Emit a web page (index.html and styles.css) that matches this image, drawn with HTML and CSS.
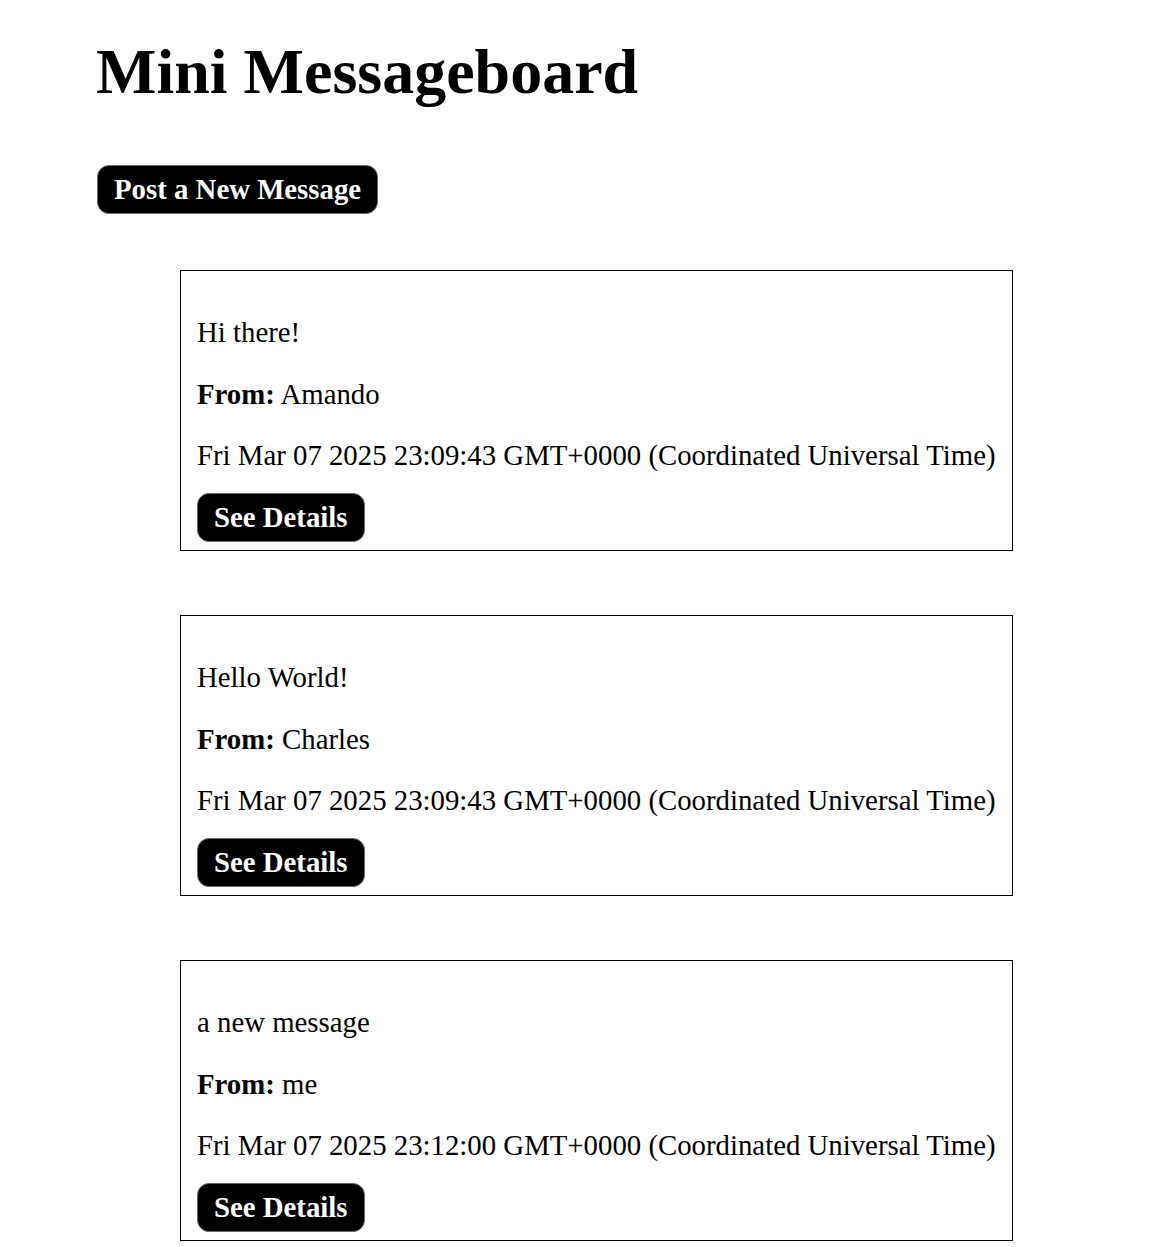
FILE: index.html
```html
<!DOCTYPE html>
<html lang="en">
<head>
<meta charset="utf-8">
<title>Mini Messageboard</title>
<link rel="stylesheet" href="styles.css">
</head>
<body>
<main class="page">
  <h1 class="title">Mini Messageboard</h1>
  <a class="btn btn-new" href="#">Post a New Message</a>
  <div class="messages">
    <div class="card">
      <p class="line">Hi there!</p>
      <p class="line"><strong>From:</strong> Amando</p>
      <p class="line date">Fri Mar 07 2025 23:09:43 GMT+0000 (Coordinated Universal Time)</p>
      <a class="btn" href="#">See Details</a>
    </div>
    <div class="card">
      <p class="line">Hello World!</p>
      <p class="line"><strong>From:</strong> Charles</p>
      <p class="line date">Fri Mar 07 2025 23:09:43 GMT+0000 (Coordinated Universal Time)</p>
      <a class="btn" href="#">See Details</a>
    </div>
    <div class="card">
      <p class="line">a new message</p>
      <p class="line"><strong>From:</strong> me</p>
      <p class="line date">Fri Mar 07 2025 23:12:00 GMT+0000 (Coordinated Universal Time)</p>
      <a class="btn" href="#">See Details</a>
    </div>
  </div>
</main>
</body>
</html>
```
FILE: styles.css
```css
html, body {
  margin: 0;
  padding: 0;
  background: #fff;
}
body {
  font-family: "Liberation Serif", "Times New Roman", serif;
  font-size: 28.8px;
  color: #000;
}
.page {
  padding: 35px 0 0 96px;
  display: flex;
  flex-direction: column;
  align-items: flex-start;
}
.title {
  margin: 0;
  font-size: 64px;
  font-weight: bold;
  line-height: normal;
}
.btn {
  display: inline-block;
  background: #000;
  color: #fff;
  font-weight: bold;
  font-size: 28.8px;
  line-height: 33px;
  padding: 7px 16px;
  border: 1px solid #6b6b6b;
  border-radius: 12px;
  text-decoration: none;
}
.btn-new {
  margin-top: 56px;
  margin-left: 1px;
}
.messages {
  margin: 56px 0 0 84px;
  display: flex;
  flex-direction: column;
  align-items: flex-start;
  gap: 64px;
}
.card {
  border: 1px solid #000;
  padding: 16px 16px 8px 16px;
}
.line {
  margin: 28.8px 0;
  line-height: 33px;
}
.line.date {
  margin-bottom: 20.6px;
}
```
